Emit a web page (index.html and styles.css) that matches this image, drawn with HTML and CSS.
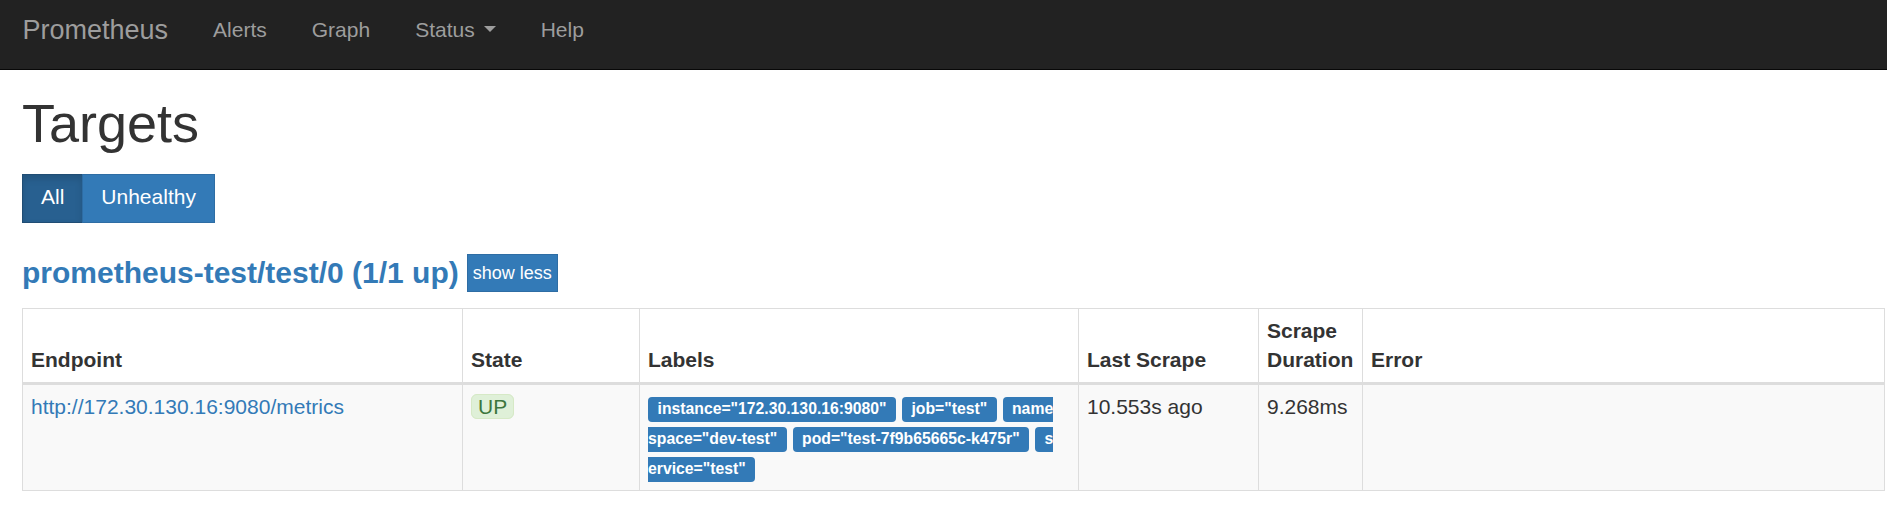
FILE: index.html
```html
<!DOCTYPE html>
<html lang="en">
<head>
<meta charset="utf-8">
<title>Prometheus Time Series Collection and Processing Server</title>
<link rel="stylesheet" href="styles.css">
</head>
<body>
<nav class="navbar">
  <a class="brand" href="#">Prometheus</a>
  <ul class="nav">
    <li><a href="#">Alerts</a></li>
    <li><a href="#">Graph</a></li>
    <li><a href="#">Status<span class="caret"></span></a></li>
    <li><a href="#">Help</a></li>
  </ul>
</nav>
<main class="container">
  <h1 class="title">Targets</h1>
  <div class="btn-group">
    <button class="btn btn-primary active">All</button><button class="btn btn-primary">Unhealthy</button>
  </div>
  <div class="job-header">
    <h2 class="job-title"><a href="#">prometheus-test/test/0 (1/1 up)</a></h2>
    <button class="btn-xs">show less</button>
  </div>
  <table class="targets">
    <colgroup>
      <col class="c-endpoint"><col class="c-state"><col class="c-labels"><col class="c-last"><col class="c-dur"><col class="c-err">
    </colgroup>
    <thead>
      <tr>
        <th>Endpoint</th>
        <th>State</th>
        <th>Labels</th>
        <th>Last Scrape</th>
        <th>Scrape Duration</th>
        <th>Error</th>
      </tr>
    </thead>
    <tbody>
      <tr>
        <td><a href="#">http://172.30.130.16:9080/metrics</a></td>
        <td><span class="state-up">UP</span></td>
        <td class="labels"><span class="label">instance="172.30.130.16:9080"</span> <span class="label">job="test"</span> <span class="label">namespace="dev-test"</span> <span class="label">pod="test-7f9b65665c-k475r"</span> <span class="label">service="test"</span></td>
        <td>10.553s ago</td>
        <td>9.268ms</td>
        <td></td>
      </tr>
    </tbody>
  </table>
</main>
</body>
</html>
```
FILE: styles.css
```css
* { box-sizing: border-box; }
html, body { margin: 0; padding: 0; }
body {
  font-family: "Liberation Sans", Arial, Helvetica, sans-serif;
  font-size: 21px;
  line-height: 30px;
  color: #333;
  background: #fff;
}
a { color: #337ab7; text-decoration: none; }

.navbar {
  display: flex;
  height: 70px;
  background: #222;
  border-bottom: 1px solid #080808;
}
.brand {
  display: block;
  padding: 15px 22.5px 0;
  font-size: 27px;
  line-height: 30px;
  color: #9d9d9d;
}
.nav {
  display: flex;
  margin: 0;
  padding: 0;
  list-style: none;
}
.nav a {
  display: block;
  padding: 18px 22.5px 0;
  line-height: 24px;
  color: #9d9d9d;
}
.caret {
  display: inline-block;
  width: 0;
  height: 0;
  margin-left: 9px;
  vertical-align: middle;
  border-top: 6px solid;
  border-left: 6px solid transparent;
  border-right: 6px solid transparent;
  position: relative;
  top: -2px;
}

.container { padding: 0 3px 0 22px; }

.title {
  margin: 25px 0 0;
  font-size: 54px;
  line-height: 57px;
  font-weight: 500;
  color: #333;
}

.btn-group { display: flex; margin-top: 22px; }
.btn {
  font-family: inherit;
  font-size: 21px;
  line-height: 30px;
  padding: 7px 18px 10px;
  border: 1px solid #2e6da4;
  border-radius: 0;
  background: #337ab7;
  color: #fff;
  margin: 0;
}
.btn + .btn { margin-left: -1px; }
.btn.active {
  background: #286090;
  border-color: #204d74;
  box-shadow: inset 0 4px 7px rgba(0,0,0,.125);
}

.job-header {
  display: flex;
  align-items: center;
  gap: 8px;
  margin-top: 31px;
  height: 38px;
}
.job-title {
  margin: 0;
  font-size: 30px;
  line-height: 33px;
  font-weight: 700;
  position: relative;
  top: -1px;
}
.btn-xs {
  font-family: inherit;
  font-size: 18px;
  line-height: 24px;
  height: 38px;
  padding: 0 5px;
  border: 1px solid #2e6da4;
  background: #337ab7;
  color: #fff;
  border-radius: 0;
}

.targets {
  margin-top: 16px;
  width: 1862px;
  table-layout: fixed;
  border-collapse: collapse;
  border: 1px solid #ddd;
}
.c-endpoint { width: 440px; }
.c-state { width: 177px; }
.c-labels { width: 439px; }
.c-last { width: 180px; }
.c-dur { width: 104px; }
.c-err { width: 522px; }

.targets th, .targets td {
  border: 1px solid #ddd;
  text-align: left;
}
.targets th {
  padding: 7px 8px 8px;
  line-height: 29px;
  vertical-align: bottom;
  font-weight: 700;
  border-bottom: 3px solid #ddd;
  background: #fff;
}
.targets td {
  padding: 7px 8px 8px;
  vertical-align: top;
  background: #f9f9f9;
}
.targets td.labels {
  word-break: break-all;
  padding-right: 19px;
}

.state-up {
  padding: 0 6px;
  border: 1px solid #d6e9c6;
  border-radius: 6px;
  background: #dff0d8;
  color: #3c763d;
}
.label {
  padding: 3px 9.5px 4.7px;
  font-size: 15.75px;
  font-weight: 700;
  line-height: 1;
  color: #fff;
  background: #337ab7;
  border-radius: 4px;
}
```
